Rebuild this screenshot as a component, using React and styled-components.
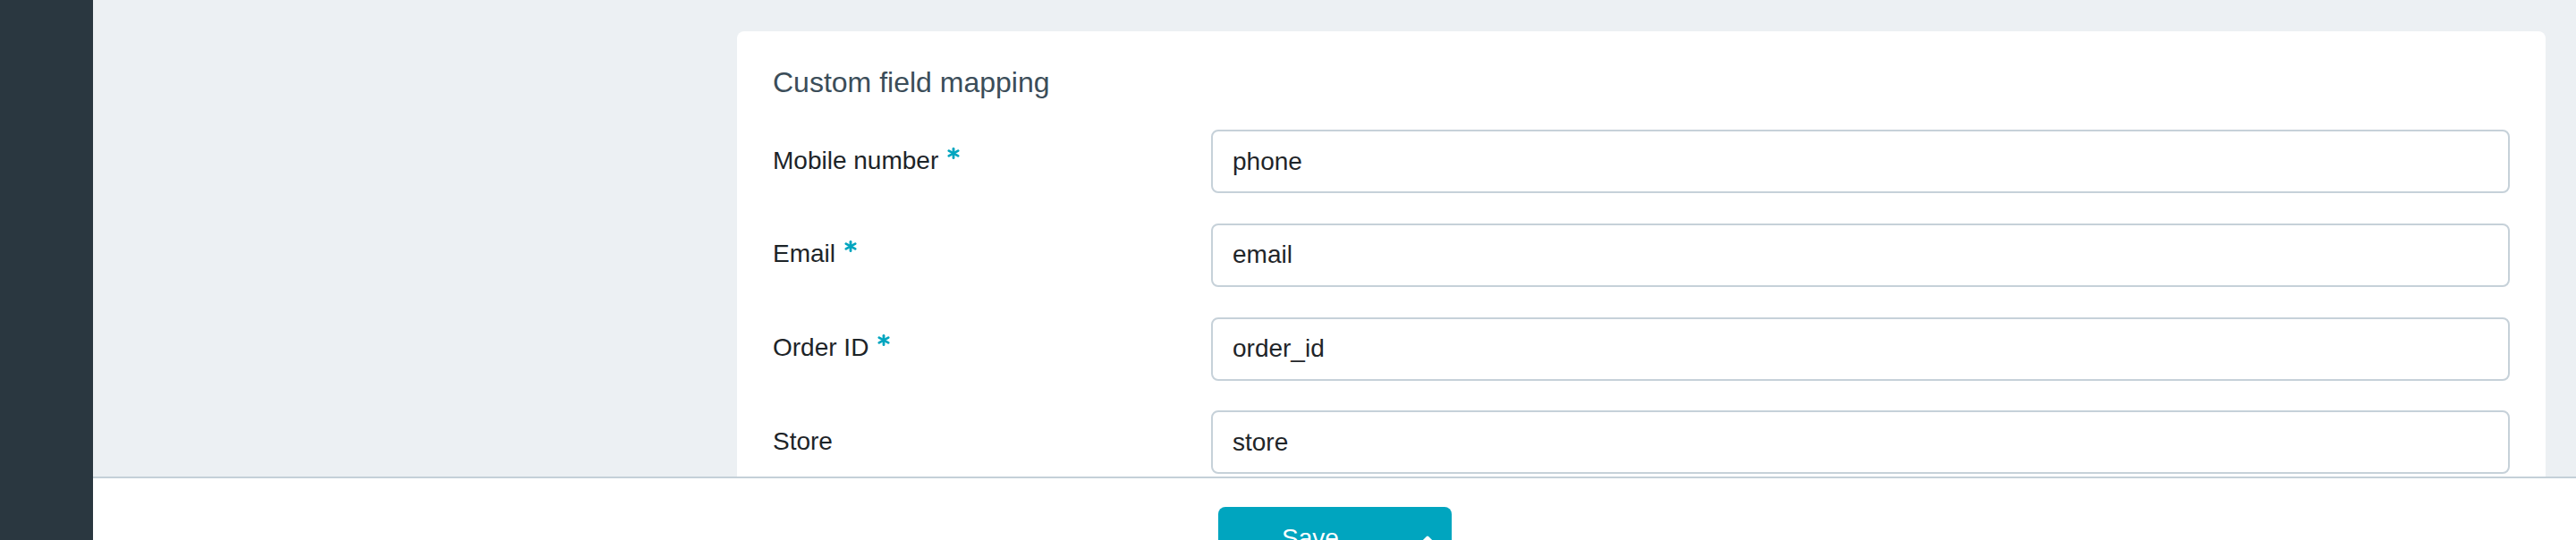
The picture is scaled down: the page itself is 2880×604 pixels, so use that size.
import React from "react";
import styled, { createGlobalStyle } from "styled-components";

const GlobalStyle = createGlobalStyle`
	* {
		box-sizing: border-box;
	}
	body {
		margin: 0;
		font-family: "Liberation Sans", Arial, sans-serif;
		background: #ecf0f3;
	}
`;

const Page = styled.div`
	display: flex;
	height: 604px;
	overflow: hidden;
`;

const Sidebar = styled.aside`
	width: 104px;
	flex-shrink: 0;
	background: #2a3740;
`;

const Main = styled.div`
	flex: 1;
	display: flex;
	flex-direction: column;
	min-width: 0;
`;

const Content = styled.div`
	flex: 1;
	overflow: hidden;
	padding: 35px 34px 0 720px;
`;

const Card = styled.section`
	background: #ffffff;
	border-radius: 8px;
	padding: 37px 40px 40px 40px;
`;

const Title = styled.h2`
	margin: 0 0 33px;
	font-size: 32px;
	line-height: 40px;
	font-weight: 400;
	color: #3b4d59;
`;

const Fields = styled.div`
	display: grid;
	grid-template-columns: 490px 1fr;
	row-gap: 33.77px;
`;

const Label = styled.label`
	padding-top: 16.6px;
	font-size: 28px;
	line-height: 36px;
	color: #1d2428;
`;

const Required = styled.svg`
	width: 14px;
	height: 13px;
	margin-left: 10px;
	vertical-align: 11px;
	overflow: visible;
`;

const Input = styled.input`
	width: 100%;
	height: 71px;
	padding: 0 22px;
	border: 2px solid #c6d1d9;
	border-radius: 8px;
	font-family: "Liberation Sans", Arial, sans-serif;
	font-size: 28px;
	color: #1f2529;
	background: #ffffff;
	outline: none;
`;

const Footer = styled.footer`
	height: 71px;
	flex-shrink: 0;
	display: flex;
	justify-content: center;
	align-items: flex-start;
	padding-top: 31.7px;
	background: #ffffff;
	border-top: 2px solid #c4d0d8;
`;

const SaveButton = styled.button`
	display: flex;
	align-items: center;
	width: 261px;
	height: 70px;
	padding: 0;
	border: none;
	border-radius: 8px;
	background: #00a5bf;
	color: #ffffff;
	font-family: "Liberation Sans", Arial, sans-serif;
	font-size: 28px;
	cursor: pointer;
`;

const SaveLabel = styled.span`
	flex: 1;
	text-align: center;
`;

const Caret = styled.span`
	width: 54px;
	display: flex;
	justify-content: center;
	align-items: center;
	padding-top: 4px;
`;

const fields = [
	{ label: "Mobile number", value: "phone", required: true },
	{ label: "Email", value: "email", required: true },
	{ label: "Order ID", value: "order_id", required: true },
	{ label: "Store", value: "store", required: false }
];

const Asterisk = () => (
	<Required viewBox="0 0 14 13">
		<g stroke="#00a5bf" strokeWidth="2.8" strokeLinecap="round">
			<line x1="7" y1="1.3" x2="7" y2="11.7" />
			<line x1="1.8" y1="3.6" x2="12.2" y2="9.4" />
			<line x1="1.8" y1="9.4" x2="12.2" y2="3.6" />
		</g>
	</Required>
);

const App = () => {
	return (
		<>
			<GlobalStyle />
			<Page>
				<Sidebar />
				<Main>
					<Content>
						<Card>
							<Title>Custom field mapping</Title>
							<Fields>
								{fields.map(field => (
									<React.Fragment key={field.value}>
										<Label htmlFor={field.value}>
											{field.label}
											{field.required ? <Asterisk /> : null}
										</Label>
										<Input
											id={field.value}
											defaultValue={field.value}
										/>
									</React.Fragment>
								))}
							</Fields>
						</Card>
					</Content>
					<Footer>
						<SaveButton>
							<SaveLabel>Save</SaveLabel>
							<Caret>
								<svg width="16" height="10" viewBox="0 0 16 10">
									<path
										d="M2 8 L8 2 L14 8"
										fill="none"
										stroke="#ffffff"
										strokeWidth="3"
										strokeLinecap="round"
										strokeLinejoin="round"
									/>
								</svg>
							</Caret>
						</SaveButton>
					</Footer>
				</Main>
			</Page>
		</>
	);
};

export default App;
